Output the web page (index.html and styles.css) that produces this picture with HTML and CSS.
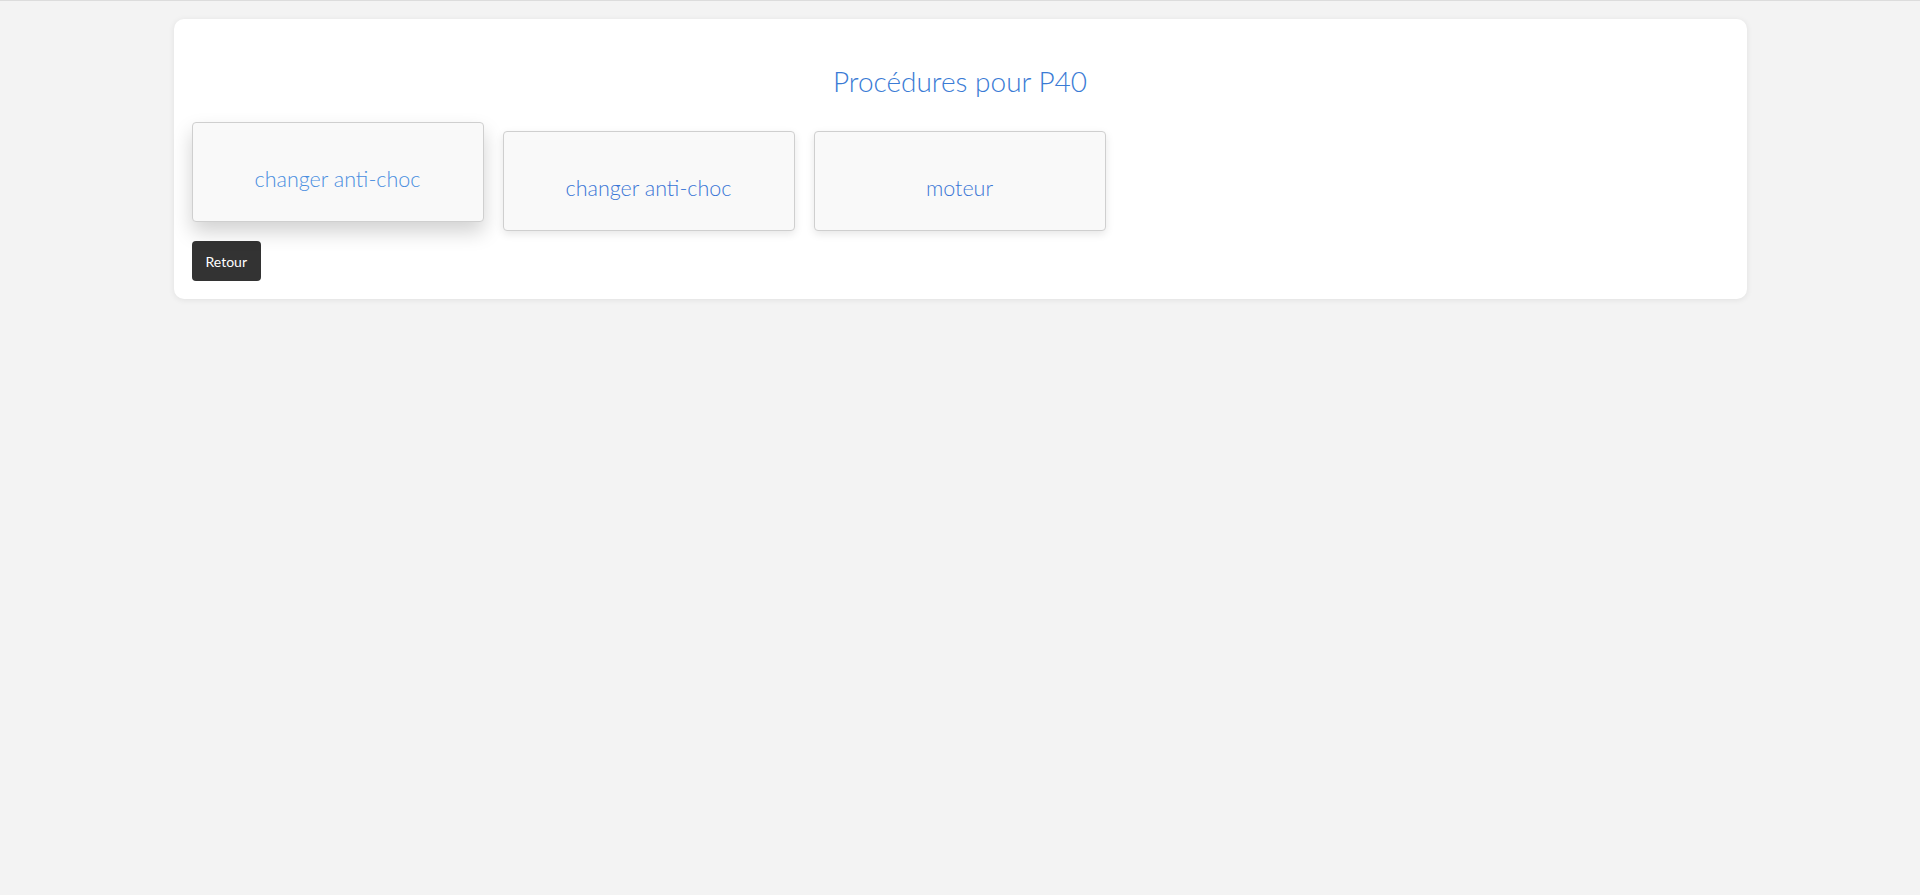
FILE: index.html
```html
<!DOCTYPE html>
<html lang="fr">
<head>
<meta charset="utf-8">
<title>Procédures pour P40</title>
<link rel="stylesheet" href="styles.css">
</head>
<body>
<main class="card">
  <h1 class="title">Procédures pour P40</h1>
  <div class="tiles">
    <a class="tile tile-hover" href="#">changer anti-choc</a>
    <a class="tile" href="#">changer anti-choc</a>
    <a class="tile" href="#">moteur</a>
  </div>
  <button class="btn-back" type="button">Retour</button>
</main>
</body>
</html>
```

FILE: styles.css
```css
html, body {
  margin: 0;
  padding: 0;
}
body {
  background: #f3f3f3;
  border-top: 1px solid #dcdcdc;
  font-family: "Lato", "Open Sans", "Liberation Sans", sans-serif;
  min-height: 894px;
}
.card {
  width: 1573px;
  box-sizing: border-box;
  margin: 18px auto 0;
  background: #ffffff;
  border-radius: 10px;
  box-shadow: 0 1px 6px rgba(0, 0, 0, 0.08);
  padding: 18px;
}
.title {
  margin: 24px 0 30px;
  font-size: 28px;
  line-height: 40px;
  font-weight: 300;
  color: #3a7bd5;
  text-align: center;
}
.tiles {
  display: flex;
  gap: 19px;
  align-items: flex-start;
}
.tile {
  box-sizing: border-box;
  width: 292px;
  height: 100px;
  padding-top: 13px;
  display: flex;
  align-items: center;
  justify-content: center;
  background: #f9f9f9;
  border: 1px solid #cfcfcf;
  border-radius: 4px;
  box-shadow: 0 3px 8px rgba(0, 0, 0, 0.1);
  color: #3a76d6;
  font-size: 21.5px;
  line-height: 24px;
  font-weight: 300;
  text-decoration: none;
}
.tile-hover {
  transform: translateY(-9px);
  box-shadow: 0 10px 20px rgba(0, 0, 0, 0.18);
  color: #4a8ee0;
}
.btn-back {
  margin-top: 10px;
  height: 40px;
  padding: 0 14px;
  background: #333333;
  color: #ffffff;
  border: none;
  border-radius: 4px;
  font-family: "Lato", "Open Sans", sans-serif;
  font-size: 14px;
  cursor: pointer;
}
```
